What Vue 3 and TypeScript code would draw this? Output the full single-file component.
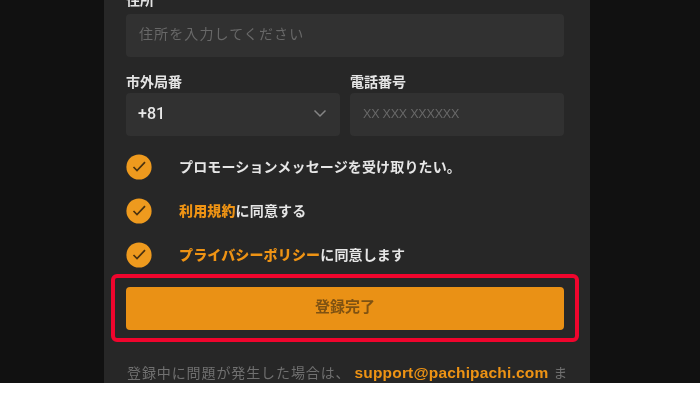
<script setup lang="ts">
const checks = [
  { link: '', rest: 'プロモーションメッセージを受け取りたい。' },
  { link: '利用規約', rest: 'に同意する' },
  { link: 'プライバシーポリシー', rest: 'に同意します' },
]
</script>

<template>
  <div class="page">
    <main class="panel">
      <div class="field first">
        <label class="label">住所</label>
        <div class="input placeholder jp">住所を入力してください</div>
      </div>
      <div class="row">
        <div class="field">
          <label class="label">市外局番</label>
          <div class="input select">
            <span class="code">+81</span>
            <svg class="chev" width="14" height="9" viewBox="0 0 14 9" fill="none">
              <path d="M1.5 1.5 7 7l5.5-5.5" stroke="#858585" stroke-width="1.5" />
            </svg>
          </div>
        </div>
        <div class="field">
          <label class="label">電話番号</label>
          <div class="input placeholder xx">XX XXX XXXXXX</div>
        </div>
      </div>
      <ul class="checks">
        <li v-for="c in checks" :key="c.rest" class="check">
          <svg width="26" height="26" viewBox="0 0 26 26">
            <circle cx="13" cy="13" r="12.6" fill="#ee9a1e" />
            <path d="M7.5 13 11 16.5 19 8.2" fill="none" stroke="#4a3210" stroke-width="1.7" />
          </svg>
          <span class="check-text"><b v-if="c.link" class="orange">{{ c.link }}</b>{{ c.rest }}</span>
        </li>
      </ul>
      <div class="submit-wrap">
        <button class="submit" type="button">登録完了</button>
        <div class="highlight"></div>
      </div>
      <p class="foot">登録中に問題が発生した場合は、<b class="mail">support@pachipachi.com</b> ま</p>
    </main>
  </div>
</template>

<style>
html, body { margin: 0; background: #fff; }
</style>

<style scoped>
.page {
  height: 383px;
  overflow: hidden;
  background: #111;
  display: flex;
  justify-content: center;
  padding-right: 6px;
  box-sizing: border-box;
  width: 700px;
  font-family: "Liberation Sans", "Noto Sans CJK JP", sans-serif;
}
.panel {
  width: 486px;
  height: 383px;
  flex: none;
  box-sizing: border-box;
  background: #272727;
  padding: 0 26px 0 22px;
  filter: blur(0.5px);
}
.field { display: flex; flex-direction: column; min-width: 0; }
.label {
  font-size: 14px;
  line-height: 20px;
  font-weight: 700;
  color: #e4e4e4;
  height: 20px;
  margin-bottom: 1px;
}
.first { margin-top: -10px; }
.first .label { margin-bottom: 4px; }
.input {
  height: 43px;
  border-radius: 4px;
  background: #313131;
  display: flex;
  align-items: center;
  padding: 0 13px;
  box-sizing: border-box;
}
.placeholder { color: #686868; }
.jp { font-size: 14px; letter-spacing: 1.1px; padding-bottom: 5px; }
.xx { font-size: 12.5px; letter-spacing: -0.2px; padding-bottom: 1px; }
.row {
  display: grid;
  grid-template-columns: 214px 214px;
  gap: 10px;
  margin-top: 15px;
}
.select { justify-content: space-between; padding: 0 13px 2px 12px; }
.code { color: #e8e8e8; font-family: Roboto, "Liberation Sans", sans-serif; font-size: 16px; font-weight: 500; }
.checks {
  list-style: none;
  margin: 18px 0 0;
  padding: 0;
  display: flex;
  flex-direction: column;
  gap: 18px;
}
.check { display: flex; align-items: center; gap: 27px; height: 26px; }
.check-text { font-size: 14px; font-weight: 700; color: #e6e6e6; letter-spacing: 0.15px; padding-bottom: 2px; }
.orange { color: #ee9314; }
.submit-wrap { position: relative; margin-top: 19px; }
.submit {
  display: block;
  width: 100%;
  height: 43px;
  border: 0;
  border-radius: 4px;
  background: #ea9115;
  color: #7f5212;
  font-family: inherit;
  font-size: 15px;
  font-weight: 700;
  padding: 0 0 6px;
}
.highlight {
  position: absolute;
  left: -15px;
  right: -15px;
  top: -13px;
  bottom: -12px;
  border: 4px solid #f0052d;
  border-radius: 6px;
}
.foot {
  margin: 30px 0 0 1px;
  font-size: 14px;
  line-height: 26px;
  color: #707070;
  white-space: nowrap;
  letter-spacing: 0.9px;
}
.mail { color: #ee9314; font-size: 15.5px; letter-spacing: 0.18px; margin-left: 4px; }
</style>
